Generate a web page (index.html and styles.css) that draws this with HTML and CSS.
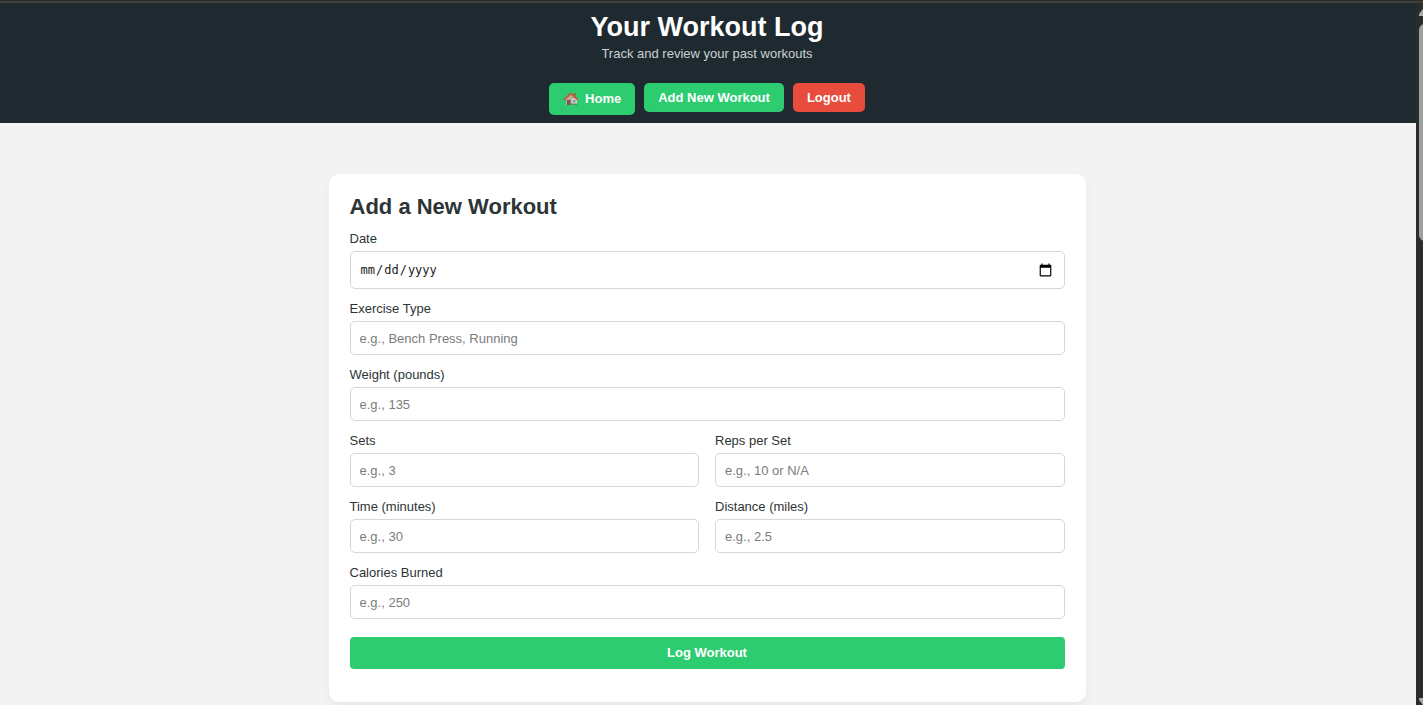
FILE: index.html
```html
<!DOCTYPE html>
<html lang="en">
<head>
<meta charset="utf-8">
<title>Your Workout Log</title>
<link rel="stylesheet" href="styles.css">
</head>
<body>
<div class="window-edge"></div>
<div class="viewport">
  <div class="page">
    <header class="header">
      <h1 class="title">Your Workout Log</h1>
      <p class="subtitle">Track and review your past workouts</p>
      <nav class="nav">
        <a class="btn btn-home" href="#home">
          <svg class="house" viewBox="0 0 16 16" aria-hidden="true">
            <path fill="#b9aca0" d="M3 7 8 3l5 4v7H3z"/>
            <path fill="#d5d0cc" d="M9 7.500h5V14H9z"/>
            <path fill="#74584f" d="M4 9h3.500v5H4z"/>
            <path fill="#8797a5" d="M10 9h2.500v2.500H10z"/>
            <path fill="#a9533d" d="M10.500 2h2v4h-2z"/>
            <path fill="none" stroke="#b8643f" stroke-width="2" stroke-linecap="round" stroke-linejoin="round" d="m1.500 8.500 6-6 6.500 5.500"/>
            <path fill="#56964c" d="M8 12.500h6.500V14H8z"/>
          </svg>
          Home
        </a>
        <a class="btn" href="#add">Add New Workout</a>
        <a class="btn btn-logout" href="#logout">Logout</a>
      </nav>
    </header>
    <main class="main">
      <form class="card">
        <h2 class="card-title">Add a New Workout</h2>
        <div class="field">
          <label for="date">Date</label>
          <input class="input input-date" type="date" id="date">
        </div>
        <div class="field">
          <label for="exercise">Exercise Type</label>
          <input class="input" type="text" id="exercise" placeholder="e.g., Bench Press, Running">
        </div>
        <div class="field">
          <label for="weight">Weight (pounds)</label>
          <input class="input" type="text" id="weight" placeholder="e.g., 135">
        </div>
        <div class="row">
          <div class="field">
            <label for="sets">Sets</label>
            <input class="input" type="text" id="sets" placeholder="e.g., 3">
          </div>
          <div class="field">
            <label for="reps">Reps per Set</label>
            <input class="input" type="text" id="reps" placeholder="e.g., 10 or N/A">
          </div>
        </div>
        <div class="row">
          <div class="field">
            <label for="time">Time (minutes)</label>
            <input class="input" type="text" id="time" placeholder="e.g., 30">
          </div>
          <div class="field">
            <label for="distance">Distance (miles)</label>
            <input class="input" type="text" id="distance" placeholder="e.g., 2.5">
          </div>
        </div>
        <div class="field">
          <label for="calories">Calories Burned</label>
          <input class="input" type="text" id="calories" placeholder="e.g., 250">
        </div>
        <button class="submit" type="submit">Log Workout</button>
      </form>
    </main>
  </div>
  <div class="scrollbar" aria-hidden="true">
    <svg class="arrow" viewBox="0 0 4 7"><path d="M4 0v7H0V5z"/></svg>
    <div class="thumb"></div>
    <svg class="arrow" viewBox="0 0 4 7"><path d="M0 0h4v7L0 2z"/></svg>
  </div>
</div>
</body>
</html>
```
FILE: styles.css
```css
* {
  box-sizing: border-box;
}

body {
  margin: 0;
  height: 100vh;
  display: flex;
  flex-direction: column;
  overflow: hidden;
  background: #f3f3f3;
  color: #2d3436;
  font-family: "Liberation Sans", Arial, sans-serif;
  font-size: 13px;
  line-height: 16px;
}

.window-edge {
  flex: none;
  height: 3px;
  background: #2a2a28;
  border-bottom: 2px solid #42403d;
}

.viewport {
  flex: 1;
  min-height: 0;
  display: flex;
}

.page {
  flex: 1;
  overflow: hidden;
}

.header {
  padding: 8px 18px 8px 16px;
  background: #1e2a2f;
  text-align: center;
}

.title {
  margin: 0;
  color: #fff;
  font-size: 27px;
  line-height: 32px;
}

.subtitle {
  margin: 3px 0 21px;
  color: #ccd1d5;
}

.nav {
  display: flex;
  justify-content: center;
  align-items: flex-start;
  gap: 9px;
}

.btn {
  padding: 6px 14px;
  border-radius: 5px;
  background: #2ecc71;
  color: #fff;
  font-weight: bold;
  line-height: 17px;
  text-decoration: none;
}

.btn-home {
  display: flex;
  align-items: center;
  gap: 6px;
  line-height: 20px;
}

.btn-logout {
  background: #e74c3c;
}

.house {
  width: 16px;
  height: 16px;
}

.main {
  padding: 51px 18px 51px 16px;
}

.card {
  max-width: 757px;
  margin: 0 auto;
  padding: 19px 21px 33px;
  border-radius: 10px;
  background: #fff;
  box-shadow: 0 4px 10px rgba(0, 0, 0, 0.05);
}

.card-title {
  margin: 0 0 10px;
  font-size: 22px;
  line-height: 28px;
}

.field {
  flex: 1;
  display: flex;
  flex-direction: column;
  gap: 4px;
  margin-bottom: 12px;
}

.row {
  display: flex;
  gap: 16px;
}

.input {
  width: 100%;
  height: 34px;
  padding: 0 9px;
  border: 1px solid #d6d6d6;
  border-radius: 5px;
  background: #fff;
  color: #222;
  font: inherit;
}

.input::placeholder {
  color: #7c7c7c;
}

.input-date {
  height: 38px;
  font-family: "DejaVu Sans Mono", monospace;
  font-size: 12px;
}

.input-date::-webkit-calendar-picker-indicator {
  width: 15px;
  height: 15px;
}

.submit {
  display: block;
  width: 100%;
  height: 32px;
  margin-top: 18px;
  border: 0;
  border-radius: 4px;
  background: #2ecc71;
  color: #fff;
  font: inherit;
  font-weight: bold;
}

.scrollbar {
  flex: none;
  width: 7px;
  padding: 6px 0 0 3px;
  display: flex;
  flex-direction: column;
  background: #2c2c2a;
  overflow: hidden;
}

.arrow {
  flex: none;
  width: 4px;
  height: 7px;
  fill: #a8a8a8;
}

.thumb {
  width: 12px;
  height: 217px;
  margin: 8px 0 auto;
  border-radius: 6px;
  background: #9f9f9f;
}
```
